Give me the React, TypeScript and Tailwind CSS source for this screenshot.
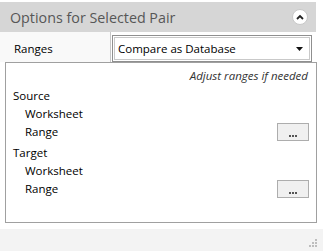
import React from "react";

const font = { fontFamily: '"Open Sans", "Noto Sans", sans-serif' };

function DotsButton() {
  return (
    <div className="w-[32px] h-[18px] border border-[#adadad] bg-[#f0f0f0] flex items-end justify-center pb-[3px]">
      <div className="flex gap-[1px]">
        <span className="w-[2px] h-[2px] bg-[#555]" />
        <span className="w-[2px] h-[2px] bg-[#555]" />
        <span className="w-[2px] h-[2px] bg-[#555]" />
      </div>
    </div>
  );
}

export default function App() {
  return (
    <div className="w-[323px] h-[251px] bg-white flex flex-col overflow-hidden text-black" style={font}>
      <div className="h-[2px]" />
      <div className="w-[316px] h-[30px] bg-[#d6d6d6] flex items-center justify-between pl-[10px] pr-[8px]">
        <span className="text-[14.3px] text-[#575757] leading-none pt-[3px]">Options for Selected Pair</span>
        <div className="w-[16px] h-[16px] rounded-full bg-white border border-[#c8c8c8] flex items-center justify-center">
          <svg width="8" height="6" viewBox="0 0 8 6">
            <path d="M1 5 L4 2 L7 5" fill="none" stroke="#222" strokeWidth="1.8" />
          </svg>
        </div>
      </div>
      <div className="flex h-[30px] w-[316px]">
        <div className="w-[111px] h-full bg-[#f9f9f9] border-r border-[#c8c8c8] flex items-center pl-[14px] pt-[3px] text-[11.5px]">
          Ranges
        </div>
        <div className="ml-[1px] mt-[3px] w-[200px] h-[27px] border border-[#8f8f8f] p-[1px]">
          <div className="w-full h-full border border-[#c9c9c9] flex items-center justify-between pl-[3px] pr-[6px] text-[11.5px]">
            <span className="pt-[1px]">Compare as Database</span>
            <svg width="7" height="4" viewBox="0 0 7 4">
              <path d="M0 0 H7 L3.5 4 Z" fill="#111" />
            </svg>
          </div>
        </div>
      </div>
      <div className="ml-[5px] w-[312px] h-[161px] border border-[#a0a0a0] bg-white flex flex-col text-[11.5px] pt-[4px]">
        <div className="h-[18px] flex items-center justify-end pr-[8px] italic text-[#333]">Adjust ranges if needed</div>
        <div className="h-[2px]" />
        <div className="h-[18px] flex items-center pl-[7px]">Source</div>
        <div className="h-[18px] flex items-center pl-[19px]">Worksheet</div>
        <div className="h-[18px] flex items-center justify-between pl-[19px] pr-[7px]">
          <span>Range</span>
          <DotsButton />
        </div>
        <div className="h-[3px]" />
        <div className="h-[18px] flex items-center pl-[7px]">Target</div>
        <div className="h-[18px] flex items-center pl-[19px]">Worksheet</div>
        <div className="h-[18px] flex items-center justify-between pl-[19px] pr-[7px]">
          <span>Range</span>
          <DotsButton />
        </div>
      </div>
      <div className="h-[6px]" />
      <div className="flex-1 bg-[#f3f3f3] flex items-end justify-end pr-[5px] pb-[3px]">
        <svg width="10" height="10" viewBox="0 0 10 10">
          <rect x="7" y="1" width="2" height="2" fill="#bdbdbd" />
          <rect x="4" y="4" width="2" height="2" fill="#bdbdbd" />
          <rect x="7" y="4" width="2" height="2" fill="#bdbdbd" />
          <rect x="1" y="7" width="2" height="2" fill="#bdbdbd" />
          <rect x="4" y="7" width="2" height="2" fill="#bdbdbd" />
          <rect x="7" y="7" width="2" height="2" fill="#bdbdbd" />
        </svg>
      </div>
    </div>
  );
}
